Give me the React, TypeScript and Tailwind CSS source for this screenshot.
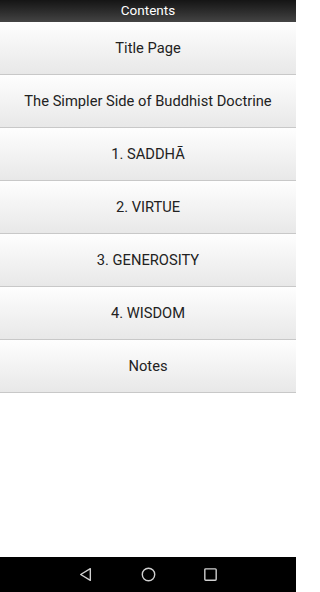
import React from "react";

const items = [
  "Title Page",
  "The Simpler Side of Buddhist Doctrine",
  "1. SADDHĀ",
  "2. VIRTUE",
  "3. GENEROSITY",
  "4. WISDOM",
  "Notes",
];

export default function App() {
  return (
    <div
      className="flex h-[592px] w-[296px] flex-col bg-white"
      style={{ fontFamily: "Roboto, 'Noto Sans', sans-serif" }}
    >
      <div className="flex h-[22px] items-center justify-center bg-gradient-to-b from-[#151515] to-[#444444] text-[13.5px] leading-none text-white">
        Contents
      </div>
      <div className="flex flex-col">
        {items.map((t) => (
          <div
            key={t}
            className="flex h-[53px] items-center justify-center border-b border-[#c8c8c8] bg-gradient-to-b from-[#fefefe] to-[#e8e8e8] pt-[1px] text-[14.7px] text-[#222222]"
          >
            {t}
          </div>
        ))}
      </div>
      <div className="flex-1" />
      <div className="flex h-[35px] items-center justify-center bg-black">
        <div className="flex w-[140px] items-center justify-between">
          <svg width="15" height="15" viewBox="0 0 14 14">
            <path d="M11.5 1.5 L2.5 7 L11.5 12.5 Z" fill="none" stroke="#d0d0d0" strokeWidth="1.3" strokeLinejoin="round" />
          </svg>
          <svg width="15" height="15" viewBox="0 0 14 14">
            <circle cx="7" cy="7" r="5.8" fill="none" stroke="#d0d0d0" strokeWidth="1.3" />
          </svg>
          <svg width="15" height="15" viewBox="0 0 14 14">
            <rect x="1.7" y="1.7" width="10.6" height="10.6" rx="0.8" fill="none" stroke="#d0d0d0" strokeWidth="1.3" />
          </svg>
        </div>
      </div>
    </div>
  );
}
